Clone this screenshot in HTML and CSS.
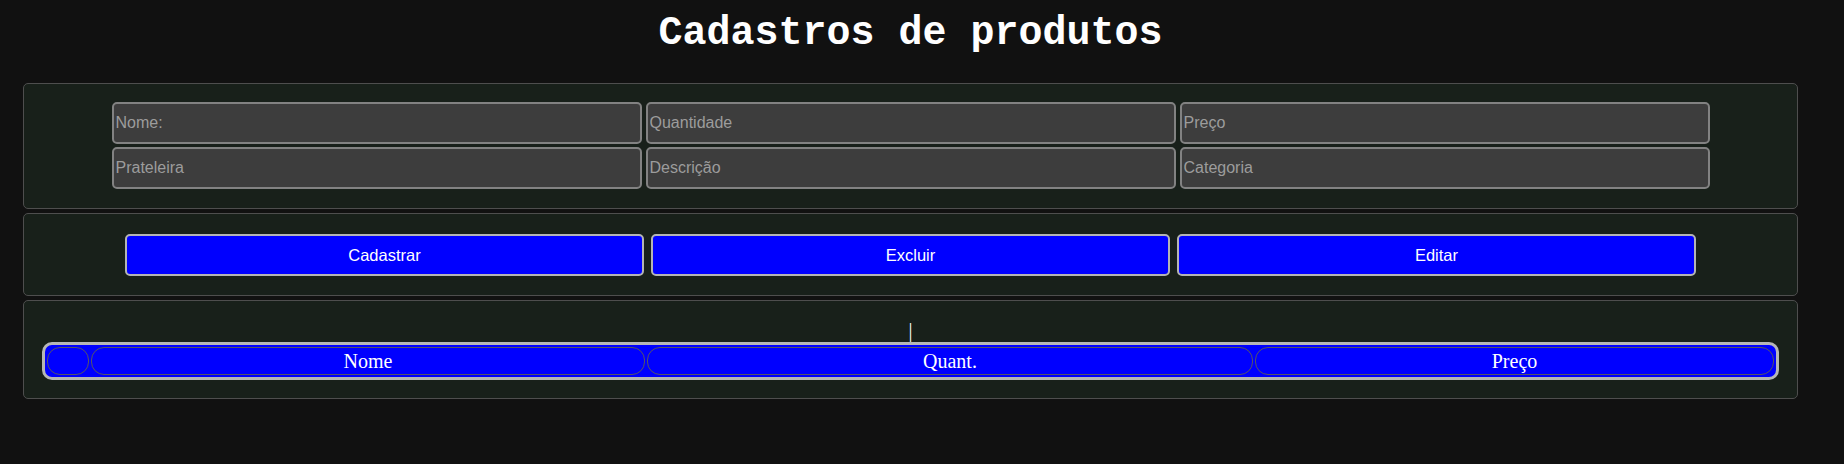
FILE: index.html
```html
<!DOCTYPE html>
<html lang="pt-BR">
<head>
<meta charset="utf-8">
<title>Cadastros de produtos</title>
<link rel="stylesheet" href="styles.css">
</head>
<body>
<div class="page">
  <h1 class="title">Cadastros de produtos</h1>

  <section class="panel panel-form">
    <div class="fields">
      <input class="field" type="text" placeholder="Nome:">
      <input class="field" type="text" placeholder="Quantidade">
      <input class="field" type="text" placeholder="Preço">
      <input class="field" type="text" placeholder="Prateleira">
      <input class="field" type="text" placeholder="Descrição">
      <input class="field" type="text" placeholder="Categoria">
    </div>
  </section>

  <section class="panel panel-actions">
    <div class="actions">
      <button class="btn" type="button">Cadastrar</button>
      <button class="btn" type="button">Excluir</button>
      <button class="btn" type="button">Editar</button>
    </div>
  </section>

  <section class="panel panel-list">
    <table class="grid">
      <caption class="caret">|</caption>
      <thead>
        <tr>
          <th class="col-sel"></th>
          <th class="col-name">Nome</th>
          <th class="col-qty">Quant.</th>
          <th class="col-price">Preço</th>
        </tr>
      </thead>
    </table>
  </section>
</div>
</body>
</html>
```

FILE: styles.css
```css
html, body {
  margin: 0;
  background: #111111;
}

.page {
  width: 1775px;
  margin-left: 23px;
  padding-top: 11px;
}

.title {
  margin: 0 0 27px;
  font: bold 40px/normal "Liberation Mono", "Courier New", monospace;
  color: #ffffff;
  text-align: center;
}

.panel {
  background: #18201a;
  border: 1px solid #4e4e4e;
  border-radius: 5px;
}

.panel-form {
  padding: 18px 0 19px;
}

.fields {
  display: grid;
  grid-template-columns: repeat(3, 530px);
  column-gap: 4px;
  row-gap: 3px;
  justify-content: center;
}

.field {
  box-sizing: border-box;
  height: 42px;
  margin: 0;
  padding: 0 2px;
  border: 2px solid #828282;
  border-radius: 5px;
  background: #3d3d3d;
  color: #dddddd;
  font: 16px "Liberation Sans", Arial, sans-serif;
  outline: none;
}

.field::placeholder {
  color: #9c9c9c;
}

.panel-actions {
  margin-top: 4px;
  padding: 20px 0 19px;
}

.actions {
  display: grid;
  grid-template-columns: repeat(3, 519px);
  column-gap: 7px;
  justify-content: center;
}

.btn {
  box-sizing: border-box;
  height: 42px;
  margin: 0;
  border: 2px solid #b4b4b4;
  border-radius: 5px;
  background: #0000ff;
  color: #ffffff;
  font: 16.5px "Liberation Sans", Arial, sans-serif;
  cursor: pointer;
}

.panel-list {
  margin-top: 4px;
  padding: 18px;
}

.grid {
  width: 100%;
  table-layout: fixed;
  border: 3px solid #b6b6b6;
  border-radius: 10px;
  border-spacing: 2px;
  background: #0000ff;
}

.caret {
  font: 20px/normal "Liberation Serif", "Times New Roman", serif;
  color: #ffffff;
  text-align: center;
}

.grid th {
  box-sizing: border-box;
  height: 28px;
  padding: 0;
  border: 1px solid #555566;
  border-radius: 13px;
  font: normal 20px/normal "Liberation Serif", "Times New Roman", serif;
  color: #ffffff;
  text-align: center;
}

.grid .col-sel { width: 42px; }
.grid .col-name { width: 554px; }
.grid .col-qty { width: 606px; }
```
